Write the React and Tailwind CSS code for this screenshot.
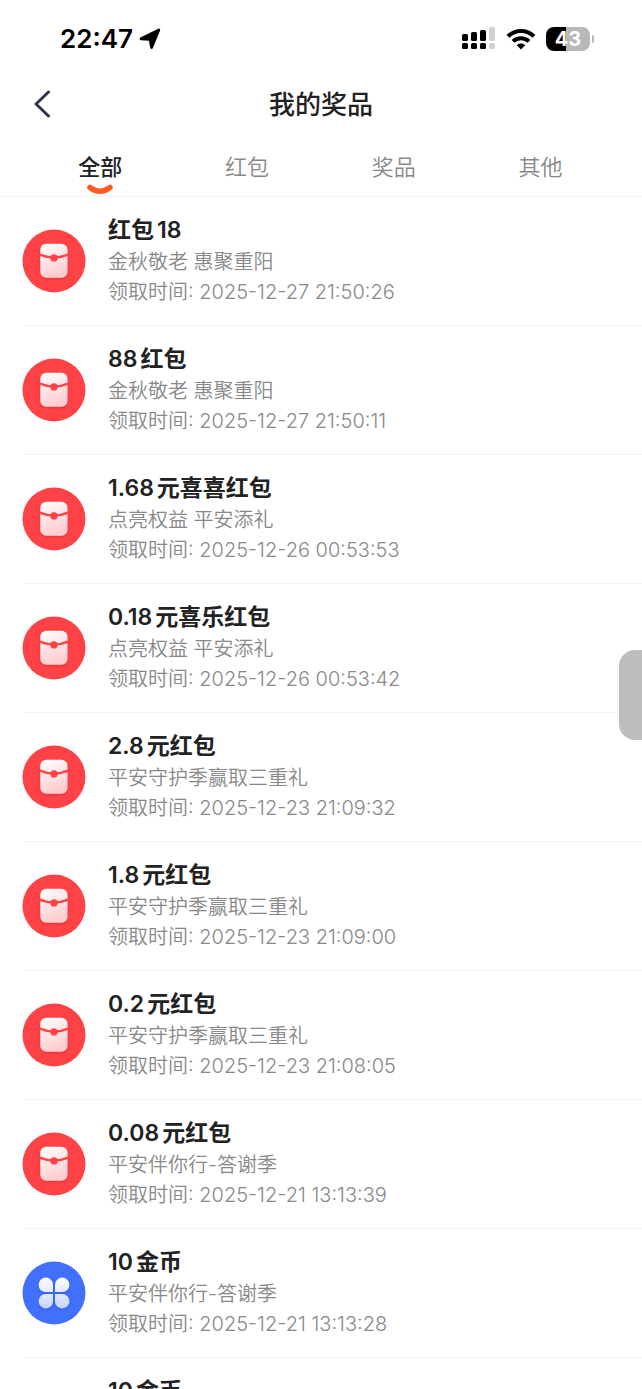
import { useState } from "react"

const tabs = ["全部", "红包", "奖品", "其他"];

const prizes = [
    {id:1, type:"packet", name:["红包", "18"], activity:"金秋敬老 惠聚重阳", time:"2025-12-27 21:50:26"},
    {id:2, type:"packet", name:["88", "红包"], activity:"金秋敬老 惠聚重阳", time:"2025-12-27 21:50:11"},
    {id:3, type:"packet", name:["1.68", "元喜喜红包"], activity:"点亮权益 平安添礼", time:"2025-12-26 00:53:53"},
    {id:4, type:"packet", name:["0.18", "元喜乐红包"], activity:"点亮权益 平安添礼", time:"2025-12-26 00:53:42"},
    {id:5, type:"packet", name:["2.8", "元红包"], activity:"平安守护季赢取三重礼", time:"2025-12-23 21:09:32"},
    {id:6, type:"packet", name:["1.8", "元红包"], activity:"平安守护季赢取三重礼", time:"2025-12-23 21:09:00"},
    {id:7, type:"packet", name:["0.2", "元红包"], activity:"平安守护季赢取三重礼", time:"2025-12-23 21:08:05"},
    {id:8, type:"packet", name:["0.08", "元红包"], activity:"平安伴你行-答谢季", time:"2025-12-21 13:13:39"},
    {id:9, type:"coin", name:["10", "金币"], activity:"平安伴你行-答谢季", time:"2025-12-21 13:13:28"},
    {id:10, type:"coin", name:["10", "金币"], activity:"平安伴你行-答谢季", time:"2025-12-21 13:13:20"},
];

function PacketIcon() {
    return(
        <svg viewBox="0 0 64 64" className="w-16 h-16 flex-none" aria-hidden="true">
            <defs>
                <linearGradient id="packet" x1="0" y1="0" x2="0.3" y2="1">
                    <stop offset="0" stopColor="#ffffff" />
                    <stop offset="1" stopColor="#ffcdd0" />
                </linearGradient>
                <filter id="packetShadow" x="-30%" y="-30%" width="160%" height="160%">
                    <feDropShadow dx="0" dy="1" stdDeviation="1.2" floodColor="#b3121c" floodOpacity="0.45" />
                </filter>
            </defs>
            <circle cx="32" cy="32" r="31.5" fill="#ff4246" />
            <g filter="url(#packetShadow)">
                <rect x="18.3" y="14.8" width="27.2" height="34" rx="6" fill="url(#packet)" />
            </g>
            <path d="M18 25.600Q25 28.600 32 28.600Q39 28.600 46 25.600" fill="none" stroke="#ff4246" strokeWidth="2.500" />
            <circle cx="32" cy="28.9" r="3.700" fill="#ff4246" />
        </svg>
    )
}

function CoinIcon() {
    return(
        <svg viewBox="0 0 64 64" className="w-16 h-16 flex-none" aria-hidden="true">
            <defs>
                <linearGradient id="petal" x1="0" y1="16" x2="0" y2="48" gradientUnits="userSpaceOnUse">
                    <stop offset="0" stopColor="#ffffff" />
                    <stop offset="1" stopColor="#c5d3ff" />
                </linearGradient>
                <filter id="petalShadow" x="-30%" y="-30%" width="160%" height="160%">
                    <feDropShadow dx="0" dy="1" stdDeviation="1.2" floodColor="#1338b0" floodOpacity="0.4" />
                </filter>
            </defs>
            <circle cx="32" cy="32" r="31.5" fill="#4070fd" />
            <g fill="url(#petal)" filter="url(#petalShadow)">
                <path d="M31 31H23.800A7.200 7.200 0 1 1 31 23.800Z" />
                <path d="M33 31V23.800A7.200 7.200 0 1 1 40.200 31Z" />
                <path d="M31 33V40.200A7.200 7.200 0 1 1 23.800 33Z" />
                <path d="M33 33H40.200A7.200 7.200 0 1 1 33 40.200Z" />
            </g>
        </svg>
    )
}

function StatusBar() {
    return(
        <section className="flex items-center justify-between h-19 pt-0.5 pl-15 pr-12">
            <div className="flex items-center gap-1.5">
                <p className="text-[26px] leading-8 font-semibold text-black">22:47</p>
                <svg viewBox="0 0 22 22" className="w-5.5 h-5.5" aria-hidden="true">
                    <path d="M19.800 2L12.600 19.500L11 11.300L2 10.800Z" fill="#000" stroke="#000" strokeWidth="2.800" strokeLinejoin="round" />
                </svg>
            </div>
            <div className="flex items-center gap-2.5">
                <svg viewBox="0 0 34 24" className="w-8.5 h-6" aria-hidden="true">
                    <g fill="#000">
                        <rect x="0" y="7" width="6" height="7" rx="1.500" />
                        <rect x="9" y="5" width="6" height="9" rx="1.500" />
                        <rect x="18" y="3" width="6" height="11" rx="1.500" />
                        <rect x="0" y="16" width="6" height="6" rx="1.500" />
                        <rect x="9" y="16" width="6" height="6" rx="1.500" />
                        <rect x="18" y="16" width="6" height="6" rx="1.500" />
                    </g>
                    <g fill="#d0d0d0">
                        <rect x="27" y="0" width="6" height="14" rx="1.500" />
                        <rect x="27" y="16" width="6" height="6" rx="1.500" />
                    </g>
                </svg>
                <svg viewBox="0 0 30 22" className="w-7.5 h-5.5" aria-hidden="true">
                    <g fill="none" stroke="#000" strokeWidth="4">
                        <path d="M2 8.300C9.300 1.100 20.700 1.100 28 8.300" />
                        <path d="M7 13.400C11.600 9.100 18.400 9.100 23 13.400" />
                    </g>
                    <path d="M15 21.500L10.600 17.100C13.200 14.900 16.800 14.900 19.400 17.100Z" fill="#000" />
                </svg>
                <div className="flex items-center gap-0.5">
                    <div className="flex items-center justify-center w-11 h-6 rounded-lg bg-linear-to-r from-black from-45% to-[#b8b8b8] to-45% text-white text-xl leading-6 font-bold">43</div>
                    <div className="w-0.5 h-2 rounded-r-full bg-[#b8b8b8]"></div>
                </div>
            </div>
        </section>
    )
}

function PrizeItem({prize}) {
    return(
        <li className="flex ml-6 h-[129px] border-b border-[#f4f4f4]">
            <div className="-ml-0.5 mt-8">
                {prize.type === "packet" ? <PacketIcon /> : <CoinIcon />}
            </div>
            <div className="ml-5.5 pt-[17px]">
                <h2 className="flex gap-[3px] text-[23px] leading-8 font-semibold text-[#222222]">
                    {prize.name.map((part) => <span key={part}>{part}</span>)}
                </h2>
                <p className="text-[20px] leading-8 font-[350] text-[#888888]">{prize.activity}</p>
                <p className="text-[20px] leading-7 font-[350] text-[#888888]">领取时间: {prize.time}</p>
            </div>
        </li>
    )
}

export default function App() {

    const [activeTab, setActiveTab] = useState("全部");

    return(
        <main className="relative flex flex-col w-full h-screen overflow-hidden bg-white font-['Inter','Noto_Sans_CJK_SC',sans-serif]">
            <StatusBar />
            <header className="grid grid-cols-[1fr_auto_1fr] items-center h-14">
                <button aria-label="返回" className="w-6 ml-7.5">
                    <svg viewBox="0 0 24 28" className="w-6 h-7" aria-hidden="true">
                        <path d="M18.500 2L6 14L18.500 26" fill="none" stroke="#2f354d" strokeWidth="3" strokeLinecap="round" strokeLinejoin="round" />
                    </svg>
                </button>
                <h1 className="pt-0.5 text-[26px] leading-8 font-medium text-[#222222]">我的奖品</h1>
            </header>
            <nav className="grid grid-cols-4 h-[65px] pl-[27px] pr-7 border-b border-[#f4f4f4]">
                {tabs.map((tab) =>
                    <button
                        key={tab}
                        onClick={() => setActiveTab(tab)}
                        className={activeTab === tab
                            ? "flex flex-col items-center pt-[19px] text-[22px] leading-8 font-medium text-[#222222]"
                            : "flex flex-col items-center pt-[19px] text-[22px] leading-8 font-[350] text-[#888888]"}
                    >
                        {tab}
                        {activeTab === tab &&
                            <svg viewBox="0 0 28 12" className="w-7 h-3" aria-hidden="true">
                                <path d="M4 4.500Q14 12 24 4.500" fill="none" stroke="#ff5a1f" strokeWidth="5.500" strokeLinecap="round" />
                            </svg>
                        }
                    </button>
                )}
            </nav>
            <ul className="flex-1 min-h-0 overflow-y-auto [scrollbar-width:none]">
                {prizes.map((prize) => <PrizeItem key={prize.id} prize={prize} />)}
            </ul>
            <button aria-label="侧边栏" className="absolute right-0 top-[650px] w-[23px] h-[90px] rounded-l-2xl bg-[#bdbdbd]"></button>
        </main>
    )
}
